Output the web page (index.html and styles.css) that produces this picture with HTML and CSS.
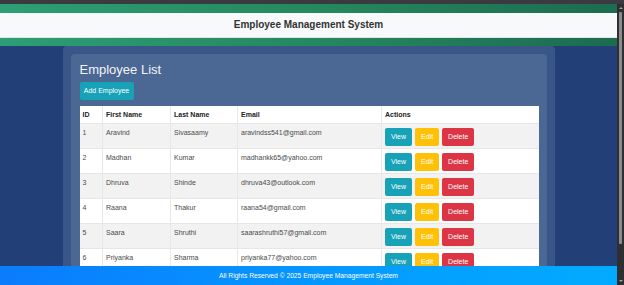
FILE: index.html
```html
<!DOCTYPE html>
<html lang="en">
<head>
<meta charset="utf-8">
<title>Employee Management System</title>
<link rel="stylesheet" href="styles.css">
</head>
<body>
<div class="topstrip"></div>
<div class="frame">
  <div class="page">
    <header class="site-header">
      <div class="title-bar">Employee Management System</div>
    </header>
    <main class="outer">
      <section class="inner">
        <h1 class="list-title">Employee List</h1>
        <button class="btn btn-info add-btn">Add Employee</button>
        <table class="emp-table">
          <colgroup>
            <col class="c-id"><col class="c-first"><col class="c-last"><col class="c-email"><col class="c-actions">
          </colgroup>
          <thead>
            <tr><th>ID</th><th>First Name</th><th>Last Name</th><th>Email</th><th>Actions</th></tr>
          </thead>
          <tbody>
            <tr><td>1</td><td>Aravind</td><td>Sivasaamy</td><td>aravindss541@gmail.com</td><td class="actions"><button class="btn btn-info">View</button><button class="btn btn-warn">Edit</button><button class="btn btn-danger">Delete</button></td></tr>
            <tr><td>2</td><td>Madhan</td><td>Kumar</td><td>madhankk65@yahoo.com</td><td class="actions"><button class="btn btn-info">View</button><button class="btn btn-warn">Edit</button><button class="btn btn-danger">Delete</button></td></tr>
            <tr><td>3</td><td>Dhruva</td><td>Shinde</td><td>dhruva43@outlook.com</td><td class="actions"><button class="btn btn-info">View</button><button class="btn btn-warn">Edit</button><button class="btn btn-danger">Delete</button></td></tr>
            <tr><td>4</td><td>Raana</td><td>Thakur</td><td>raana54@gmail.com</td><td class="actions"><button class="btn btn-info">View</button><button class="btn btn-warn">Edit</button><button class="btn btn-danger">Delete</button></td></tr>
            <tr><td>5</td><td>Saara</td><td>Shruthi</td><td>saarashruthi57@gmail.com</td><td class="actions"><button class="btn btn-info">View</button><button class="btn btn-warn">Edit</button><button class="btn btn-danger">Delete</button></td></tr>
            <tr><td>6</td><td>Priyanka</td><td>Sharma</td><td>priyanka77@yahoo.com</td><td class="actions"><button class="btn btn-info">View</button><button class="btn btn-warn">Edit</button><button class="btn btn-danger">Delete</button></td></tr>
          </tbody>
        </table>
      </section>
    </main>
    <footer class="site-footer">All Rights Reserved © 2025 Employee Management System</footer>
  </div>
  <div class="scrollbar">
    <span class="arrow-up"></span>
    <span class="thumb"></span>
    <span class="arrow-down"></span>
  </div>
</div>
</body>
</html>
```
FILE: styles.css
```css
html, body {
  margin: 0;
  padding: 0;
}
body {
  height: 285px;
  overflow: hidden;
  display: flex;
  flex-direction: column;
  font-family: "Liberation Sans", Arial, sans-serif;
  background: #223f77;
}
.topstrip {
  height: 4px;
  background: #3b3a3e;
  flex: none;
}
.frame {
  flex: 1;
  display: flex;
  min-height: 0;
}
.page {
  flex: 1;
  min-width: 0;
  background: #223f77;
  overflow: hidden;
  display: flex;
  flex-direction: column;
  position: relative;
}
.site-header {
  flex: none;
  background: linear-gradient(90deg, #2d9e75 0%, #25895f 50%, #1c6c50 100%);
  padding: 9px 0 8px;
}
.title-bar {
  height: 24px;
  line-height: 24px;
  background: #f8f9fb;
  border-bottom: 1px solid #dfe3ea;
  text-align: center;
  font-size: 10px;
  font-weight: bold;
  color: #333;
}
.outer {
  flex: 1;
  width: 476px;
  margin: 0 auto;
  padding: 8px 8px 0;
  background: #395689;
  border-radius: 4px 4px 0 0;
}
.inner {
  height: 100%;
  box-sizing: border-box;
  background: #4b6794;
  border-radius: 4px;
  padding: 8px 8px 0 9px;
}
.list-title {
  margin: 0;
  font-size: 13px;
  line-height: 16px;
  font-weight: normal;
  color: #f2f4f8;
}
.btn {
  display: inline-block;
  height: 18px;
  padding: 0 6px;
  border: none;
  border-radius: 2px;
  font-family: "Liberation Sans", Arial, sans-serif;
  font-size: 7px;
  line-height: 18px;
  color: #fff;
  vertical-align: top;
}
.btn-info { background: #17a2b8; }
.btn-warn { background: #ffc107; }
.btn-danger { background: #dc3545; }
.add-btn {
  display: block;
  margin-top: 4px;
  padding: 0 4px;
  width: 54px;
}
.emp-table {
  margin-top: 6px;
  width: 459px;
  table-layout: fixed;
  border-collapse: collapse;
  background: #fff;
  font-size: 7px;
}
.c-id { width: 23px; }
.c-first { width: 68px; }
.c-last { width: 67px; }
.c-email { width: 144px; }
.c-actions { width: 157px; }
.emp-table th,
.emp-table td {
  text-align: left;
  vertical-align: top;
  border-right: 1px solid #e8e8e8;
  border-bottom: 1px solid #e6e6e6;
  padding: 4px 3px 2px;
  line-height: 9px;
  color: #4a4a4a;
}
.emp-table th {
  height: 10px;
  font-weight: bold;
  color: #222;
  padding: 4px 3px 3px;
}
.emp-table td {
  height: 18px;
}
.emp-table tbody tr:nth-child(odd) { background: #f2f2f2; }
.emp-table tbody tr:nth-child(even) { background: #fff; }
.emp-table th:last-child,
.emp-table td:last-child { border-right: none; }
.actions {
  padding-top: 3px;
}
.actions .btn + .btn { margin-left: 3px; }
.site-footer {
  position: absolute;
  left: 0;
  right: 0;
  bottom: 0;
  height: 19px;
  line-height: 19px;
  background: linear-gradient(90deg, #0a7cfd 0%, #04a0ff 70%, #02aaff 100%);
  color: #fff;
  font-size: 6.7px;
  text-align: center;
}
.scrollbar {
  width: 7px;
  flex: none;
  background: #2f2e31;
  display: flex;
  flex-direction: column;
  align-items: center;
  padding: 3px 0 3px;
  box-sizing: border-box;
}
.arrow-up {
  width: 0;
  height: 0;
  border-left: 2px solid transparent;
  border-right: 2px solid transparent;
  border-bottom: 2px solid #a0a0a0;
}
.thumb {
  width: 3px;
  height: 232px;
  margin-top: 3px;
  background: #8c8c8c;
  border-radius: 1px;
}
.arrow-down {
  margin-top: auto;
  width: 0;
  height: 0;
  border-left: 2px solid transparent;
  border-right: 2px solid transparent;
  border-top: 2px solid #a0a0a0;
}
```
